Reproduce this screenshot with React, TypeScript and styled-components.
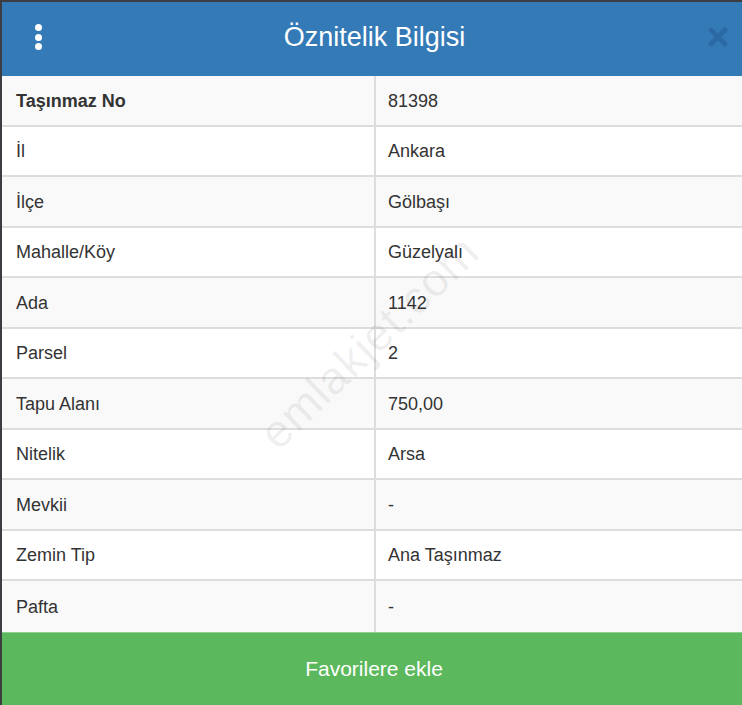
import React from 'react';
import styled, { createGlobalStyle } from 'styled-components';

const GlobalStyle = createGlobalStyle`
  html, body {
    margin: 0;
    padding: 0;
    background: #3b3d40;
    overflow: hidden;
  }
  body {
    font-family: 'Liberation Sans', Arial, sans-serif;
  }
`;

const Page = styled.div`
  padding: 2px 0 0 2px;
  height: 705px;
  box-sizing: border-box;
`;

const Modal = styled.div`
  width: 740px;
  background: #fff;
  position: relative;
  overflow: hidden;
`;

const Header = styled.div`
  height: 74px;
  background: #337ab7;
  display: flex;
  align-items: center;
  justify-content: space-between;
  padding: 0 12px 4px 29px;
  box-sizing: border-box;
`;

const Kebab = styled.div`
  display: flex;
  flex-direction: column;
  gap: 2.5px;
  width: 14px;
  align-items: center;
`;

const Dot = styled.span`
  width: 7px;
  height: 7px;
  border-radius: 50%;
  background: #fff;
`;

const Title = styled.h4`
  margin: 0;
  flex: 1;
  text-align: center;
  color: #fff;
  font-size: 27px;
  font-weight: 400;
  padding-right: 2px;
`;

const CloseButton = styled.button`
  border: none;
  background: transparent;
  padding: 0;
  width: 24px;
  height: 24px;
  display: flex;
  align-items: center;
  justify-content: center;
  cursor: pointer;
`;

const Table = styled.div`
  display: flex;
  flex-direction: column;
`;

const Row = styled.div<{ $striped: boolean }>`
  display: grid;
  grid-template-columns: 374px 1fr;
  height: 50.5px;
  box-sizing: border-box;
  border-bottom: 2px solid #dddddd;
  background: ${({ $striped }) => ($striped ? '#f9f9f9' : '#ffffff')};

  &:last-child {
    border-bottom: none;
  }
`;

const Cell = styled.div<{ $bold?: boolean }>`
  display: flex;
  align-items: center;
  font-size: 18px;
  color: #333;
  padding-top: 2px;
  font-weight: ${({ $bold }) => ($bold ? 700 : 400)};
`;

const LabelCell = styled(Cell)`
  padding-left: 14px;
  border-right: 2px solid #dddddd;
`;

const ValueCell = styled(Cell)`
  padding-left: 12px;
`;

const Watermark = styled.div`
  position: absolute;
  left: 367px;
  top: 340px;
  transform: translate(-50%, -50%) rotate(-44deg);
  font-size: 46px;
  color: rgba(0, 0, 0, 0.07);
  letter-spacing: 1px;
  pointer-events: none;
  white-space: nowrap;
`;

const FavButton = styled.button`
  width: 100%;
  height: 74px;
  border: none;
  border-top: 1px solid #8fd08f;
  background: #5cb85c;
  color: #fff;
  font-family: 'Liberation Sans', Arial, sans-serif;
  font-size: 21px;
  cursor: pointer;
  display: flex;
  align-items: center;
  justify-content: center;
  padding: 0 0 0 4px;
`;

const rows: { label: string; value: string }[] = [
  { label: 'Taşınmaz No', value: '81398' },
  { label: 'İl', value: 'Ankara' },
  { label: 'İlçe', value: 'Gölbaşı' },
  { label: 'Mahalle/Köy', value: 'Güzelyalı' },
  { label: 'Ada', value: '1142' },
  { label: 'Parsel', value: '2' },
  { label: 'Tapu Alanı', value: '750,00' },
  { label: 'Nitelik', value: 'Arsa' },
  { label: 'Mevkii', value: '-' },
  { label: 'Zemin Tip', value: 'Ana Taşınmaz' },
  { label: 'Pafta', value: '-' },
];

export default function App() {
  return (
    <>
      <GlobalStyle />
      <Page>
        <Modal>
          <Header>
            <Kebab>
              <Dot />
              <Dot />
              <Dot />
            </Kebab>
            <Title>Öznitelik Bilgisi</Title>
            <CloseButton aria-label="Kapat">
              <svg width="22" height="22" viewBox="0 0 22 22">
                <path
                  d="M4 4 L18 18 M18 4 L4 18"
                  stroke="#2c6aa6"
                  strokeWidth="5"
                  strokeLinecap="round"
                />
              </svg>
            </CloseButton>
          </Header>
          <Table>
            {rows.map((r, i) => (
              <Row key={r.label} $striped={i % 2 === 0}>
                <LabelCell $bold={i === 0}>{r.label}</LabelCell>
                <ValueCell>{r.value}</ValueCell>
              </Row>
            ))}
          </Table>
          <FavButton>Favorilere ekle</FavButton>
          <Watermark>emlakjet.com</Watermark>
        </Modal>
      </Page>
    </>
  );
}
